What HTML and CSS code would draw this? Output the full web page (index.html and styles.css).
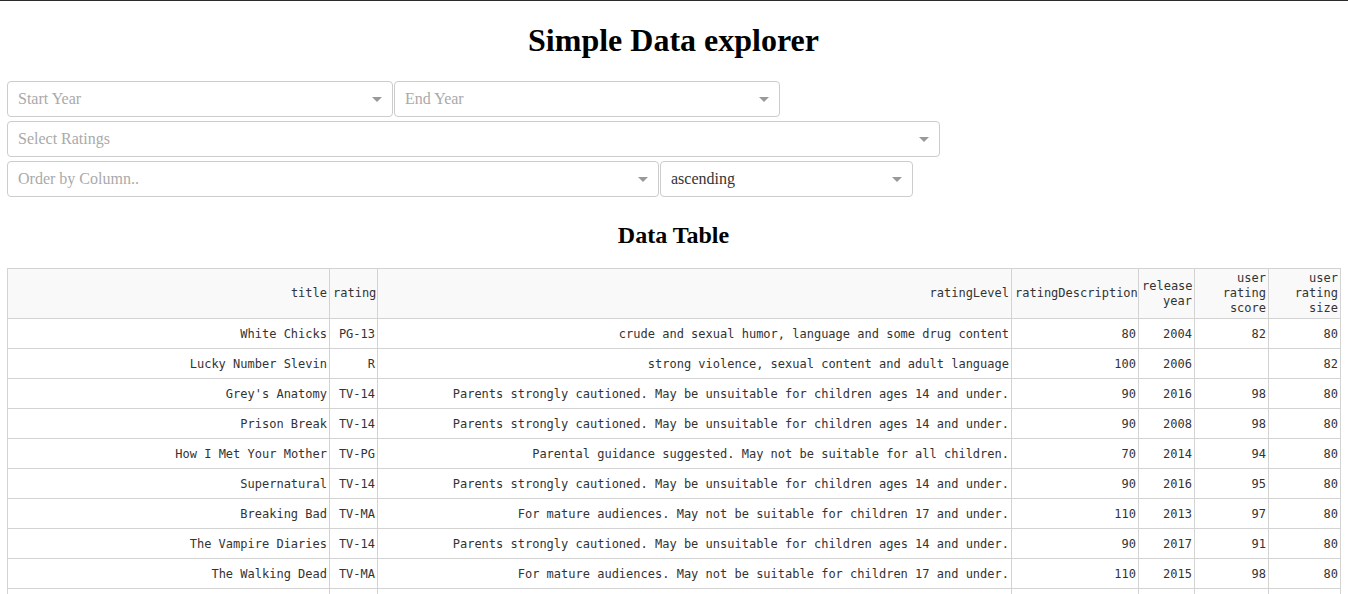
FILE: index.html
```html
<!DOCTYPE html>
<html lang="en">
<head>
<meta charset="utf-8">
<title>Simple Data explorer</title>
<link rel="stylesheet" href="styles.css">
</head>
<body>
<div class="page">
  <h1 class="title">Simple Data explorer</h1>
  <div class="filters">
    <div class="row">
      <div class="select w-year"><span class="placeholder">Start Year</span><span class="arrow"></span></div>
      <div class="select w-year"><span class="placeholder">End Year</span><span class="arrow"></span></div>
    </div>
    <div class="row">
      <div class="select w-ratings"><span class="placeholder">Select Ratings</span><span class="arrow"></span></div>
    </div>
    <div class="row">
      <div class="select w-order"><span class="placeholder">Order by Column..</span><span class="arrow"></span></div>
      <div class="select w-dir"><span class="value">ascending</span><span class="arrow"></span></div>
    </div>
  </div>
  <h2 class="subtitle">Data Table</h2>
  <table class="data">
    <colgroup>
      <col class="c-title"><col class="c-rating"><col class="c-level"><col class="c-desc"><col class="c-year"><col class="c-score"><col class="c-size">
    </colgroup>
    <thead>
      <tr>
        <th>title</th><th>rating</th><th>ratingLevel</th><th>ratingDescription</th><th>release year</th><th>user rating score</th><th>user rating size</th>
      </tr>
    </thead>
    <tbody>
      <tr><td>White Chicks</td><td>PG-13</td><td>crude and sexual humor, language and some drug content</td><td>80</td><td>2004</td><td>82</td><td>80</td></tr>
      <tr><td>Lucky Number Slevin</td><td>R</td><td>strong violence, sexual content and adult language</td><td>100</td><td>2006</td><td></td><td>82</td></tr>
      <tr><td>Grey's Anatomy</td><td>TV-14</td><td>Parents strongly cautioned. May be unsuitable for children ages 14 and under.</td><td>90</td><td>2016</td><td>98</td><td>80</td></tr>
      <tr><td>Prison Break</td><td>TV-14</td><td>Parents strongly cautioned. May be unsuitable for children ages 14 and under.</td><td>90</td><td>2008</td><td>98</td><td>80</td></tr>
      <tr><td>How I Met Your Mother</td><td>TV-PG</td><td>Parental guidance suggested. May not be suitable for all children.</td><td>70</td><td>2014</td><td>94</td><td>80</td></tr>
      <tr><td>Supernatural</td><td>TV-14</td><td>Parents strongly cautioned. May be unsuitable for children ages 14 and under.</td><td>90</td><td>2016</td><td>95</td><td>80</td></tr>
      <tr><td>Breaking Bad</td><td>TV-MA</td><td>For mature audiences. May not be suitable for children 17 and under.</td><td>110</td><td>2013</td><td>97</td><td>80</td></tr>
      <tr><td>The Vampire Diaries</td><td>TV-14</td><td>Parents strongly cautioned. May be unsuitable for children ages 14 and under.</td><td>90</td><td>2017</td><td>91</td><td>80</td></tr>
      <tr><td>The Walking Dead</td><td>TV-MA</td><td>For mature audiences. May not be suitable for children 17 and under.</td><td>110</td><td>2015</td><td>98</td><td>80</td></tr>
      <tr><td>Pretty Little Liars</td><td>TV-14</td><td>Parents strongly cautioned. May be unsuitable for children ages 14 and under.</td><td>90</td><td>2016</td><td>96</td><td>80</td></tr>
    </tbody>
  </table>
</div>
</body>
</html>
```

FILE: styles.css
```css
html, body {
  margin: 0;
  padding: 0;
  background: #fff;
}
body {
  border-top: 1px solid #2b2b2b;
  font-family: "Liberation Serif", "Times New Roman", serif;
  color: #000;
}
.page {
  padding: 0 8px 0 7px;
}
.title {
  font-size: 32px;
  font-weight: bold;
  text-align: center;
  margin: 21px 0 22px;
  line-height: 37px;
}
.filters {
  display: flex;
  flex-direction: column;
  gap: 4px;
}
.row {
  display: flex;
  gap: 1px;
}
.select {
  box-sizing: border-box;
  height: 36px;
  border: 1px solid #ccc;
  border-radius: 4px;
  display: flex;
  align-items: center;
  justify-content: space-between;
  padding: 0 10px 0 10px;
  font-size: 16px;
  background: #fff;
}
.w-year { width: 386px; }
.w-ratings { width: 933px; }
.w-order { width: 652px; }
.w-dir { width: 253px; }
.placeholder {
  color: #aaa;
}
.value {
  color: #333;
}
.arrow {
  width: 0;
  height: 0;
  border-style: solid;
  border-width: 5px 5px 2.5px;
  border-color: #999 transparent transparent;
  margin-top: 3px;
}
.subtitle {
  font-size: 24px;
  font-weight: bold;
  text-align: center;
  margin: 24px 0 19px;
  line-height: 28px;
}
.data {
  border-collapse: collapse;
  table-layout: fixed;
  width: 1333px;
  font-family: "DejaVu Sans Mono", "Liberation Mono", monospace;
  font-size: 12px;
  color: #333;
}
.c-title { width: 322px; }
.c-rating { width: 48px; }
.c-level { width: 634px; }
.c-desc { width: 127px; }
.c-year { width: 56px; }
.c-score { width: 74px; }
.c-size { width: 72px; }
.data th, .data td {
  border: 1px solid #d3d3d3;
  text-align: right;
  padding: 0 2px 0 3px;
}
.data th {
  background: #f9f9f9;
  font-weight: normal;
  height: 50px;
  line-height: 15px;
  box-sizing: border-box;
}
.data td {
  height: 30px;
  line-height: 15px;
  padding-top: 2px;
  box-sizing: border-box;
  white-space: nowrap;
  overflow: hidden;
}
```
